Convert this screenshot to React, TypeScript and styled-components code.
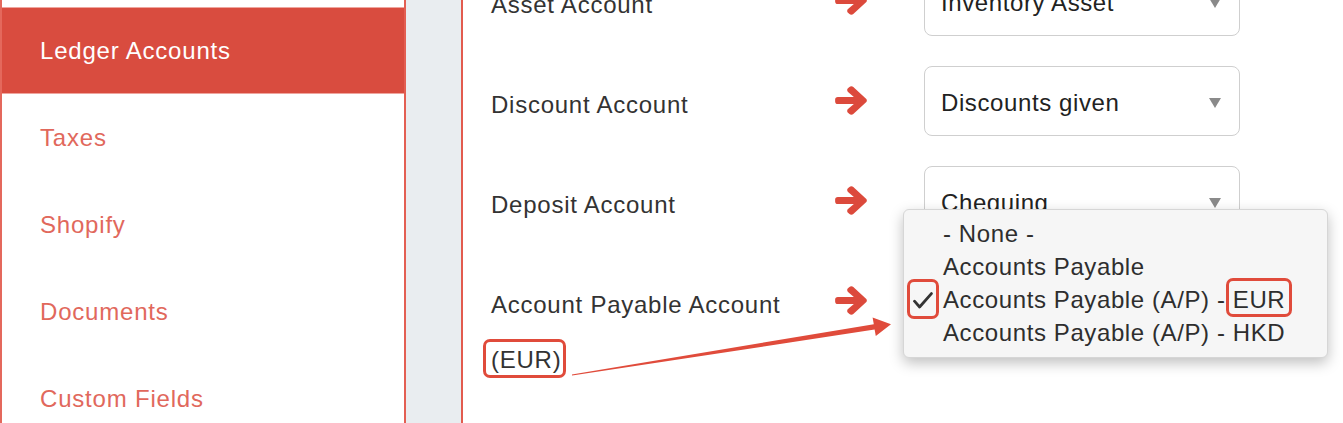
import React from 'react';
import styled, { createGlobalStyle } from 'styled-components';

const GlobalStyle = createGlobalStyle`
  html, body {
    margin: 0;
    padding: 0;
    background: #ffffff;
  }
  body {
    font-family: "Liberation Sans", Arial, Helvetica, sans-serif;
  }
  * {
    box-sizing: border-box;
  }
`;

const navItems = ['General', 'Ledger Accounts', 'Taxes', 'Shopify', 'Documents', 'Custom Fields'];

type Row = {
  label: string;
  sub?: string;
  value: string;
  open?: boolean;
};

const rows: Row[] = [
  { label: 'Asset Account', value: 'Inventory Asset' },
  { label: 'Discount Account', value: 'Discounts given' },
  { label: 'Deposit Account', value: 'Chequing' },
  { label: 'Account Payable Account', sub: '(EUR)', value: 'Accounts Payable (A/P) - EUR', open: true },
];

const options = ['- None -', 'Accounts Payable', 'Accounts Payable (A/P) - EUR', 'Accounts Payable (A/P) - HKD'];

// heavy right arrow, a bit bolder than the stock glyph
const RedArrow = () => (
  <svg width="32" height="29" viewBox="-20 17 488 478" preserveAspectRatio="none">
    <path
      fill="#dc4a3c"
      stroke="#dc4a3c"
      strokeWidth="36"
      strokeLinejoin="round"
      d="M190.5 66.9l22.2-22.2c9.4-9.4 24.6-9.4 33.9 0L441 239c9.4 9.4 9.4 24.6 0 33.9L246.6 467.3c-9.4 9.4-24.6 9.4-33.9 0l-22.2-22.2c-9.5-9.5-9.3-25 .4-34.3L311.4 296H24c-13.3 0-24-10.7-24-24v-32c0-13.3 10.7-24 24-24h287.4L190.9 101.2c-9.8-9.3-10-24.8-.4-34.3z"
    />
  </svg>
);

const CheckMark = () => (
  <svg width="20" height="17" viewBox="0 0 20 17">
    <path
      d="M1.5 9.2 L6.6 15 L18.4 1.6"
      fill="none"
      stroke="#333"
      strokeWidth="2.8"
      strokeLinecap="round"
      strokeLinejoin="round"
    />
  </svg>
);

const App = () => {
  return (
    <Page>
      <GlobalStyle />
      <Sidebar>
        <NavList>
          {navItems.map((item) => (
            <NavItem key={item} $active={item === 'Ledger Accounts'}>
              {item}
            </NavItem>
          ))}
        </NavList>
      </Sidebar>
      <Gutter />
      <Main>
        <Rows>
          {rows.map((row) => (
            <FieldRow key={row.label}>
              <Label>
                {row.label}
                {row.sub && (
                  <Sub>
                    <Marked>{row.sub}</Marked>
                  </Sub>
                )}
              </Label>
              <ArrowCell>
                <RedArrow />
              </ArrowCell>
              <SelectBox>
                <SelectText>{row.value}</SelectText>
                <Caret />
                {row.open && (
                  <Menu>
                    {options.map((opt) => {
                      const checked = opt === row.value;
                      return (
                        <MenuItem key={opt}>
                          {checked && (
                            <CheckCell>
                              <CheckMark />
                            </CheckCell>
                          )}
                          {checked ? (
                            <>
                              Accounts Payable (A/P) - <Marked $tight>EUR</Marked>
                            </>
                          ) : (
                            opt
                          )}
                        </MenuItem>
                      );
                    })}
                  </Menu>
                )}
              </SelectBox>
            </FieldRow>
          ))}
        </Rows>
      </Main>
      <Pointer width="1343" height="423" viewBox="0 0 1343 423">
        <polygon
          fill="#e04b3b"
          points="571.9,374.4 873.8,324.2 872.6,317.6 891,324.2 875.8,336 874.6,329.6 572.1,375.6"
        />
      </Pointer>
    </Page>
  );
};

export default App;

const Page = styled.div`
  position: relative;
  display: flex;
  width: 1343px;
  height: 423px;
  overflow: hidden;
  background: #ffffff;
`;

const Sidebar = styled.nav`
  width: 406px;
  flex-shrink: 0;
  background: #ffffff;
  border-left: 2px solid #e4685c;
  border-right: 2px solid #e35f53;
`;

const NavList = styled.div`
  margin-top: -80px;
  display: flex;
  flex-direction: column;
`;

const NavItem = styled.div<{ $active?: boolean }>`
  height: 87px;
  display: flex;
  align-items: center;
  padding-left: 38px;
  font-size: 24px;
  letter-spacing: 0.8px;
  color: ${(p) => (p.$active ? '#ffffff' : '#e1685c')};
  background: ${(p) => (p.$active ? '#d94c3f' : '#ffffff')};
  border-top: 1px solid ${(p) => (p.$active ? '#efa59e' : 'transparent')};
  border-bottom: 1px solid ${(p) => (p.$active ? '#efa59e' : 'transparent')};
`;

const Gutter = styled.div`
  width: 57px;
  flex-shrink: 0;
  background: #e9edf0;
  border-right: 2px solid #e25b4e;
  box-shadow: 1px 0 0 #f6c9c4;
`;

const Main = styled.main`
  flex: 1;
  padding-left: 28px;
  background: #ffffff;
`;

const Rows = styled.div`
  margin-top: -49px;
  display: flex;
  flex-direction: column;
`;

const FieldRow = styled.div`
  height: 100px;
  display: grid;
  grid-template-columns: 344px 32px 316px;
  align-items: start;
`;

const Label = styled.div`
  padding-top: 40px;
  font-size: 24px;
  line-height: 28px;
  letter-spacing: 0.75px;
  color: #333333;
  white-space: nowrap;
`;

const Sub = styled.div`
  margin-top: 27px;
`;

const Marked = styled.span<{ $tight?: boolean }>`
  position: relative;

  &::after {
    content: '';
    position: absolute;
    top: ${(p) => (p.$tight ? '-8px' : '-7px')};
    bottom: ${(p) => (p.$tight ? '-4px' : '-5px')};
    left: ${(p) => (p.$tight ? '-7px' : '-8px')};
    right: ${(p) => (p.$tight ? '-7px' : '-5px')};
    border: 3px solid #e04b3b;
    border-radius: 7px;
  }
`;

const ArrowCell = styled.div`
  height: 100px;
  display: flex;
  align-items: center;
  padding-bottom: 2px;
`;

const SelectBox = styled.div`
  position: relative;
  margin-top: 15px;
  margin-left: 57px;
  width: 316px;
  height: 70px;
  border: 1.5px solid #cfcfcf;
  border-radius: 8px;
  background: #ffffff;
  display: flex;
  align-items: center;
  padding: 4px 18px 0 16px;
`;

const SelectText = styled.span`
  flex: 1;
  font-size: 24px;
  letter-spacing: 0.6px;
  color: #222222;
  white-space: nowrap;
  overflow: hidden;
`;

const Caret = styled.span`
  width: 0;
  height: 0;
  border-left: 6.5px solid transparent;
  border-right: 6.5px solid transparent;
  border-top: 10px solid #8a8a8a;
`;

const Menu = styled.div`
  position: absolute;
  top: -58px;
  left: -22px;
  width: 425px;
  padding: 7px 0 8px;
  background: #f6f6f6;
  border: 1px solid #d6d6d6;
  border-radius: 6px;
  box-shadow: 0 5px 14px rgba(0, 0, 0, 0.25);
  z-index: 2;
`;

const MenuItem = styled.div`
  position: relative;
  height: 33px;
  line-height: 33px;
  padding-left: 39px;
  font-size: 24px;
  letter-spacing: 0.6px;
  color: #2e2e2e;
  white-space: nowrap;
`;

const CheckCell = styled.span`
  position: absolute;
  left: 3px;
  top: -4px;
  width: 32px;
  height: 40px;
  display: flex;
  align-items: center;
  justify-content: center;
  padding-top: 2px;
  border: 3px solid #e04b3b;
  border-radius: 7px;
`;

const Pointer = styled.svg`
  position: absolute;
  left: 0;
  top: 0;
  pointer-events: none;
  z-index: 3;
`;
